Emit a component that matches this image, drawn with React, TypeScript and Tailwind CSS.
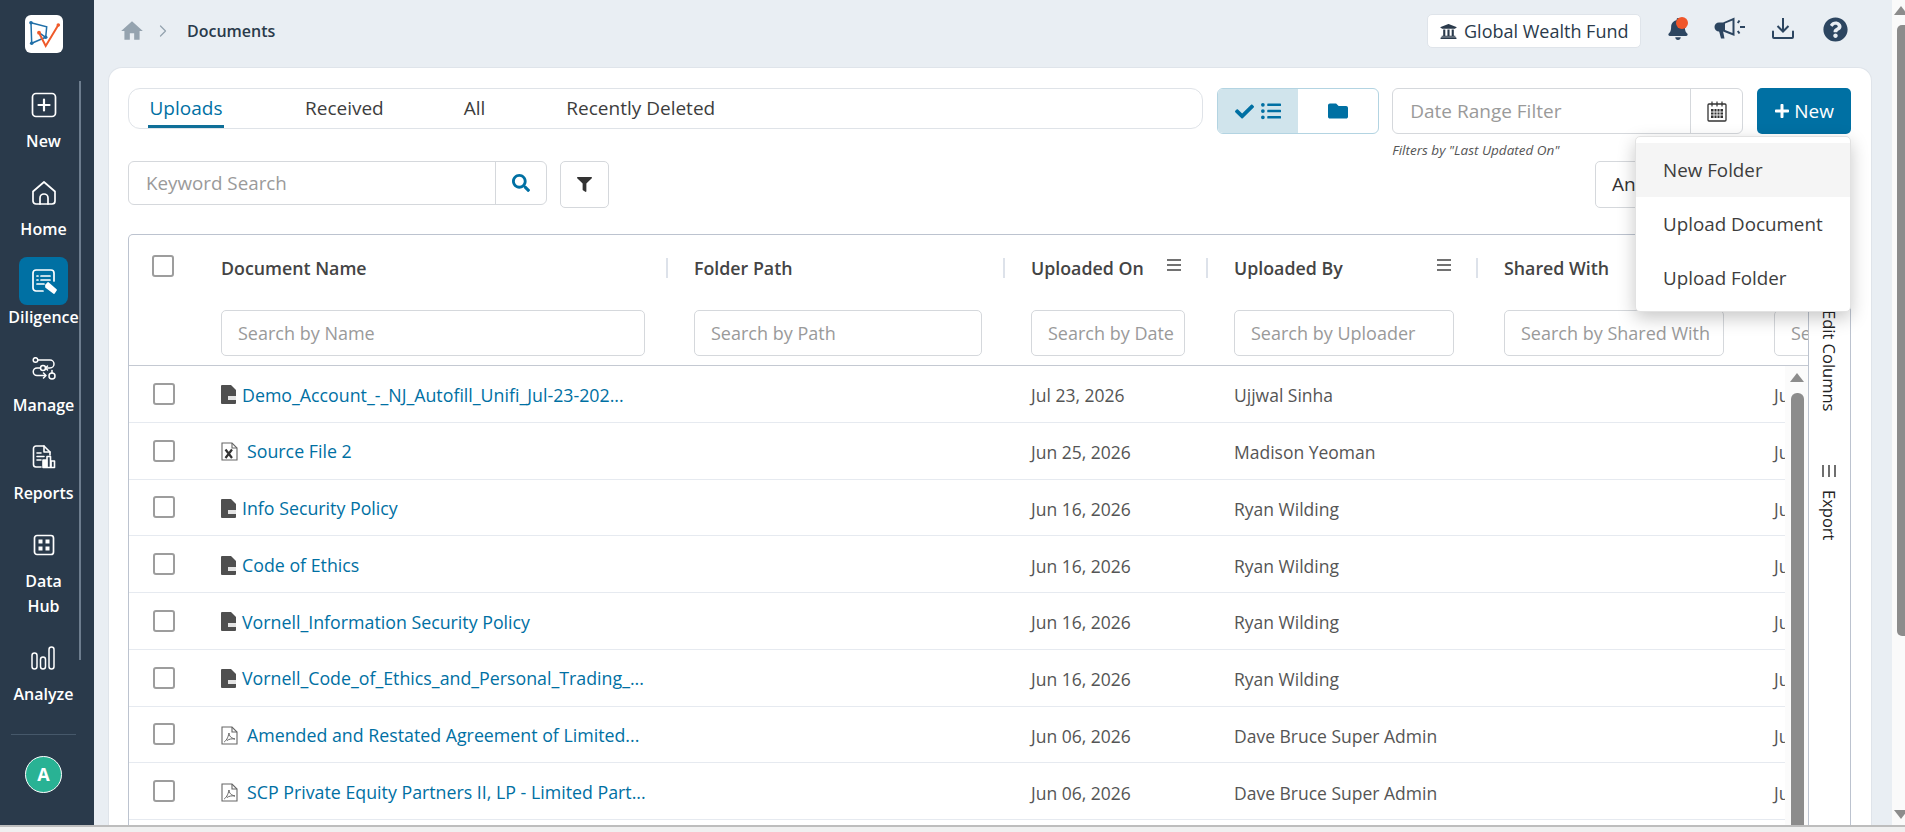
import React from 'react';
import { FaBell, FaCheck, FaFilter, FaFolder, FaListUl, FaPlus, FaQuestionCircle, FaSearch, FaUniversity } from 'react-icons/fa';
import { MdHome } from 'react-icons/md';
import { ChevronRight } from 'lucide-react';

type DocType = 'doc' | 'xls' | 'pdf';

const rows: { name: string; type: DocType; date: string; by: string }[] = [
  { name: 'Demo_Account_-_NJ_Autofill_Unifi_Jul-23-202...', type: 'doc', date: 'Jul 23, 2026', by: 'Ujjwal Sinha' },
  { name: 'Source File 2', type: 'xls', date: 'Jun 25, 2026', by: 'Madison Yeoman' },
  { name: 'Info Security Policy', type: 'doc', date: 'Jun 16, 2026', by: 'Ryan Wilding' },
  { name: 'Code of Ethics', type: 'doc', date: 'Jun 16, 2026', by: 'Ryan Wilding' },
  { name: 'Vornell_Information Security Policy', type: 'doc', date: 'Jun 16, 2026', by: 'Ryan Wilding' },
  { name: 'Vornell_Code_of_Ethics_and_Personal_Trading_...', type: 'doc', date: 'Jun 16, 2026', by: 'Ryan Wilding' },
  { name: 'Amended and Restated Agreement of Limited...', type: 'pdf', date: 'Jun 06, 2026', by: 'Dave Bruce Super Admin' },
  { name: 'SCP Private Equity Partners II, LP - Limited Part...', type: 'pdf', date: 'Jun 06, 2026', by: 'Dave Bruce Super Admin' },
];

const gridCols = 'grid grid-cols-[92px_473px_337px_203px_270px_270px_1fr]';

function Logo() {
  return (
    <svg width="38" height="38" viewBox="0 0 38 38" fill="none">
      <path d="M6 7.7 21.7 11.7 20.7 22.3 6.7 28.3Z M14 17.7 20.7 22.3" stroke="#1f6fa8" strokeWidth="1.5" />
      <path d="M14 17.7 20.7 31 33.3 10" stroke="#ef5a2a" strokeWidth="2" />
      <circle cx="6" cy="7.7" r="1.8" fill="#1f6fa8" />
      <circle cx="20.7" cy="22.3" r="1.8" fill="#1f6fa8" />
      <circle cx="6.7" cy="28.3" r="1.8" fill="#1f6fa8" />
      <circle cx="14" cy="17.7" r="1.9" fill="#ef5a2a" />
      <circle cx="33.3" cy="10" r="1.8" fill="#ef5a2a" />
    </svg>
  );
}

const strokeProps = { fill: 'none', stroke: 'white', strokeWidth: 1.7, strokeLinecap: 'round', strokeLinejoin: 'round' } as const;

function NewIcon() {
  return (
    <svg width="26" height="26" viewBox="0 0 26 26" {...strokeProps}>
      <rect x="1.5" y="1.5" width="23" height="23" rx="3.5" />
      <path d="M13 7.5v11M7.5 13h11" strokeWidth="2.2" />
    </svg>
  );
}

function HomeIcon() {
  return (
    <svg width="26" height="26" viewBox="0 0 26 26" {...strokeProps}>
      <path d="M2 11.5 13 2l11 9.5V21a3 3 0 0 1-3 3H5a3 3 0 0 1-3-3Z" />
      <path d="M9 24v-6a4 4 0 0 1 8 0v6" />
    </svg>
  );
}

function DiligenceIcon() {
  return (
    <svg width="26" height="26" viewBox="0 0 26 26" {...strokeProps}>
      <path d="M12 23H5a3 3 0 0 1-3-3V5a3 3 0 0 1 3-3h15a3 3 0 0 1 3 3v8" />
      <path d="M6 8h1M10 8h9M6 12h1M10 12h9M6 16h7" />
      <path d="m15 17 2-2 8 7-2 3-8-6Z" fill="white" />
    </svg>
  );
}

function ManageIcon() {
  return (
    <svg width="24" height="24" viewBox="0 0 24 24" {...strokeProps} strokeWidth={1.5}>
      <circle cx="3.5" cy="3" r="2.3" />
      <path d="M6 3h12a4 4 0 0 1 0 8h-4" />
      <path d="m15.5 9-2 2 2 2" />
      <circle cx="11" cy="11" r="2.5" />
      <path d="M8.5 11H5a3.5 3.5 0 0 0 0 7.5h8" />
      <path d="m11.5 16 2.5 2.5-2.5 2.5" />
      <circle cx="20" cy="19" r="3" />
      <path d="M20 13.5v2.5" />
    </svg>
  );
}

function ReportsIcon() {
  return (
    <svg width="24" height="24" viewBox="0 0 24 24" {...strokeProps} strokeWidth={1.6}>
      <path d="M9 22H4a2.5 2.5 0 0 1-2.5-2.5v-16A2.5 2.5 0 0 1 4 1h8l6 6v3" />
      <path d="M12 1v6h6" />
      <path d="M5 8h4M5 11.5h7M5 15h4" />
      <rect x="11" y="15" width="3.5" height="7.5" fill="white" />
      <rect x="15" y="11.5" width="3.5" height="11" />
      <rect x="19" y="16" width="3.5" height="6.5" />
    </svg>
  );
}

function DataHubIcon() {
  return (
    <svg width="22" height="22" viewBox="0 0 22 22" fill="none">
      <rect x="1.5" y="1.5" width="19" height="19" rx="2.5" stroke="white" strokeWidth="1.7" />
      <rect x="5.5" y="5.5" width="4" height="4" fill="white" />
      <rect x="12.5" y="5.5" width="4" height="4" fill="white" />
      <rect x="5.5" y="12.5" width="4" height="4" fill="white" />
      <rect x="12.5" y="12.5" width="4" height="4" fill="white" />
    </svg>
  );
}

function AnalyzeIcon() {
  return (
    <svg width="24" height="24" viewBox="0 0 24 24" {...strokeProps} strokeWidth={1.5}>
      <rect x="1" y="7" width="5" height="16" rx="2.5" />
      <rect x="9.5" y="11" width="5" height="12" rx="2.5" />
      <rect x="18" y="1" width="5" height="22" rx="2.5" />
    </svg>
  );
}

function MegaphoneIcon() {
  return (
    <svg width="32" height="24" viewBox="0 0 32 24" fill="none" className="ml-[25px] mt-[2px]">
      <path d="M5 6.5 h4 L20.5 1.5 V20 L9 15.5 H5 A4.5 4.5 0 0 1 5 6.5Z" fill="#2c4560" />
      <path d="M11 7.5 18.5 4.5 V17 L11 14Z" fill="#e9eef3" />
      <path d="M5 15h4l1.5 7.5H7Z" fill="#2c4560" />
      <path d="M25.5 4.5 23.8 7M26 11h5M25.5 17.5 23.8 15" stroke="#2c4560" strokeWidth="2" />
    </svg>
  );
}

function DownloadIcon() {
  return (
    <svg width="22" height="22" viewBox="0 0 22 22" fill="none" stroke="#2c4560" strokeWidth="2" className="ml-[26px] mt-[3px]">
      <path d="M11 1v13M5.5 9l5.5 5.500L16.500 9" />
      <path d="M1 14.500V20a1 1 0 0 0 1 1h18a1 1 0 0 0 1-1v-5.500" strokeLinecap="round" />
    </svg>
  );
}

function CalendarIcon() {
  return (
    <svg width="20" height="21" viewBox="0 0 20 21" fill="none">
      <rect x="1" y="3" width="18" height="17" rx="1" stroke="#333" strokeWidth="1.3" />
      <path d="M5 0.500v5M10 0.500v5M15 0.500v5" stroke="#333" strokeWidth="1.2" />
      <path d="M4 8h12v9H4Z" fill="#333" />
      <path d="M7 8v9M10 8v9M13 8v9M4 11h12M4 14h12" stroke="white" strokeWidth="0.9" />
    </svg>
  );
}

function DocFileIcon() {
  return (
    <svg width="15" height="19" viewBox="0 0 15 19" className="shrink-0">
      <path d="M0 1a1 1 0 0 1 1-1h9l5 5v13a1 1 0 0 1-1 1H1a1 1 0 0 1-1-1Z" fill="#4f4f4f" />
      <rect x="7" y="11" width="8" height="4" fill="#e4e4e4" />
    </svg>
  );
}

function XlsFileIcon() {
  return (
    <svg width="17" height="19" viewBox="0 0 17 19" fill="none" className="shrink-0">
      <path d="M1 1h10l5 5v12H1Z" stroke="#666" strokeWidth="1.1" />
      <path d="M11 1v5h5" stroke="#666" strokeWidth="1.1" />
      <path d="M4.500 7.500 11 16M11 7.500 4.500 16" stroke="#333" strokeWidth="2.2" />
    </svg>
  );
}

function PdfFileIcon() {
  return (
    <svg width="17" height="19" viewBox="0 0 17 19" fill="none" className="shrink-0">
      <path d="M1 1h10l5 5v12H1Z" stroke="#666" strokeWidth="1.1" />
      <path d="M11 1v5h5" stroke="#666" strokeWidth="1.1" />
      <path d="M3 16c2-1 4-4 5-9 0 3 2 5 6 6-3-.5-6 0-8 1.500" stroke="#666" strokeWidth="1" />
    </svg>
  );
}

function MenuLines() {
  return (
    <svg width="14" height="12" viewBox="0 0 14 12" className="shrink-0 -mt-[7px]">
      <path d="M0 1h14M0 6h14M0 11h14" stroke="#444" strokeWidth="1.5" />
    </svg>
  );
}

function NavItem({ label, active, icon }: { label: string; active?: boolean; icon: React.ReactNode }) {
  const lines = label.split(' ');
  return (
    <div className="flex flex-col items-center pb-4">
      <div className={`flex h-12 w-[49px] items-center justify-center rounded-lg ${active ? 'bg-[#0070a3]' : ''}`}>{icon}</div>
      {lines.map((l) => (
        <div key={l} className={`text-[16px] font-semibold whitespace-nowrap text-white ${lines.length > 1 ? 'h-[24.5px] leading-[25px]' : 'h-[24px] leading-[25px]'}`}>
          {l}
        </div>
      ))}
    </div>
  );
}

function Sidebar() {
  return (
    <aside className="relative flex w-[94px] shrink-0 flex-col items-center overflow-hidden bg-[#2a3a4b] pr-[7px]">
      <div className="mt-[15px] flex h-[38px] w-[38px] items-center justify-center rounded-md bg-white">
        <Logo />
      </div>
      <div className="absolute left-[79px] top-[81px] h-[579px] w-[2px] bg-[#6d7d8e]" />
      <nav className="mt-[28px] flex flex-col items-center">
        <NavItem label="New" icon={<NewIcon />} />
        <NavItem label="Home" icon={<HomeIcon />} />
        <NavItem label="Diligence" active icon={<DiligenceIcon />} />
        <NavItem label="Manage" icon={<ManageIcon />} />
        <NavItem label="Reports" icon={<ReportsIcon />} />
        <NavItem label="Data Hub" icon={<DataHubIcon />} />
        <NavItem label="Analyze" icon={<AnalyzeIcon />} />
      </nav>
      <div className="mt-[12px] h-px w-[65px] bg-[#46586a]" />
      <div className="mt-[21px] flex h-[37px] w-[37px] items-center justify-center rounded-full border border-white bg-[#29b294] text-[18px] font-bold text-white">
        A
      </div>
    </aside>
  );
}

function TopBar() {
  return (
    <header className="flex h-[67px] shrink-0 items-start text-[#2a3a4b]">
      <div className="ml-[25px] mt-[18px] flex items-center">
        <MdHome className="text-[#95a3af]" size={26} />
        <ChevronRight className="ml-[8px] text-[#95a3af]" size={20} strokeWidth={1.5} />
        <span className="ml-[14px] text-[16px] font-semibold">Documents</span>
      </div>
      <div className="ml-auto mr-[44px] mt-[14px] flex items-start">
        <div className="flex h-[34px] w-[214px] items-center gap-[7px] rounded-[5px] border border-[#dfe4ea] bg-white pl-[12px] text-[18px]">
          <FaUniversity size={17} />
          Global Wealth Fund
        </div>
        <div className="relative ml-[26px] mt-[4px] text-[#2c4560]">
          <FaBell size={22} />
          <span className="absolute left-[9px] -top-[1px] h-[12px] w-[12px] rounded-full bg-[#f0562a]" />
        </div>
        <MegaphoneIcon />
        <DownloadIcon />
        <FaQuestionCircle size={25} className="ml-[29px] mt-[3px] text-[#2c4560]" />
      </div>
    </header>
  );
}

function NewDropdown() {
  return (
    <div className="absolute right-0 top-[48px] z-20 w-[216px] rounded-[5px] border border-[#e2e2e2] bg-white py-[6px] text-[18.8px] text-[#3d3d3d] shadow-[0_6px_18px_rgba(0,0,0,0.22)]">
      <div className="flex h-[54px] items-center bg-[#f5f5f5] pl-[27px]">New Folder</div>
      <div className="flex h-[54px] items-center pl-[27px]">Upload Document</div>
      <div className="flex h-[54px] items-center pl-[27px]">Upload Folder</div>
    </div>
  );
}

function Toolbar() {
  return (
    <>
      <div className="flex items-start">
        <div className="flex h-[41px] w-[1076px] items-stretch rounded-[12px] border border-[#dfe3e8] text-[19px] text-[#3d3d3d]">
          <div className="ml-[19px] w-[76px] border-b-[3px] border-[#0f6f98] text-center font-medium leading-[38px] text-[#0070a3]">Uploads</div>
          <div className="ml-[81px] leading-[38px]">Received</div>
          <div className="ml-[80px] leading-[38px]">All</div>
          <div className="ml-[81px] leading-[38px]">Recently Deleted</div>
        </div>
        <div className="ml-[14px] flex h-[46px] w-[162px] overflow-hidden rounded-[6px] border border-[#b3d4e2]">
          <div className="flex w-[80px] items-center justify-center gap-[7px] bg-[#d0e4ec] text-[#0070a3]">
            <FaCheck size={19} />
            <FaListUl size={20} />
          </div>
          <div className="flex flex-1 items-center justify-center text-[#0070a3]">
            <FaFolder size={20} />
          </div>
        </div>
        <div className="ml-[13px] flex w-[351px] flex-col">
          <div className="flex h-[46px] rounded-[6px] border border-[#d5d8dc]">
            <div className="flex flex-1 items-center pl-[17px] text-[19px] text-[#9a9a9a]">Date Range Filter</div>
            <div className="flex w-[52px] items-center justify-center border-l border-[#d5d8dc]">
              <CalendarIcon />
            </div>
          </div>
          <div className="mt-[10px] h-[12px] text-[13.5px] italic leading-[12px] text-[#555]">Filters by "Last Updated On"</div>
        </div>
        <div className="relative ml-[14px]">
          <button className="flex h-[46px] w-[94px] items-center justify-center gap-[4px] rounded-[5px] bg-[#0070a3] text-[19px] text-white">
            <FaPlus size={16} />
            New
          </button>
          <NewDropdown />
        </div>
      </div>
      <div className="mt-[5px] flex items-start">
        <div className="flex h-[44px] w-[419px] rounded-[6px] border border-[#d5d8dc]">
          <div className="flex flex-1 items-center pl-[17px] pt-[1px] text-[18.8px] text-[#9a9a9a]">Keyword Search</div>
          <div className="flex w-[51px] items-center justify-center border-l border-[#d5d8dc] text-[#0070a3]">
            <FaSearch size={18} />
          </div>
        </div>
        <div className="ml-[13px] flex h-[47px] w-[49px] items-center justify-center rounded-[5px] border border-[#d5d8dc] text-[#333]">
          <FaFilter size={15} />
        </div>
        <div className="ml-auto flex items-start gap-[10px]">
          <div className="flex h-[47px] w-[130px] items-center rounded-[5px] border border-[#d5d8dc] pl-[16px] text-[19px] text-[#333]">Analyze</div>
          <div className="h-[47px] w-[116px] rounded-[5px] bg-[#0070a3]" />
        </div>
      </div>
    </>
  );
}

function FilterInput({ placeholder, width }: { placeholder: string; width: string }) {
  return (
    <div className={`mt-[30px] flex h-[46px] items-center overflow-hidden whitespace-nowrap rounded-[5px] border border-[#d5d8dc] pl-[16px] pt-[1px] text-[18px] text-[#9a9a9a] ${width}`}>{placeholder}</div>
  );
}

function HeaderCell({ title, placeholder, width, menu }: { title: string; placeholder: string; width: string; menu?: boolean }) {
  return (
    <div className="flex flex-col pr-[26px] pt-[21px]">
      <div className="flex h-[24px] items-center">
        <span className="flex-1 text-[17.8px] font-semibold whitespace-nowrap text-[#444]">{title}</span>
        {menu && <MenuLines />}
        <span className="ml-[25px] h-[20px] w-[2px] bg-[#dde2ea]" />
      </div>
      <FilterInput placeholder={placeholder} width={width} />
    </div>
  );
}

function Checkbox() {
  return <span className="block h-[22px] w-[22px] rounded-[3px] border-2 border-[#9d9d9d] bg-white" />;
}

function FileIcon({ type }: { type: DocType }) {
  if (type === 'doc') return <DocFileIcon />;
  return type === 'pdf' ? <PdfFileIcon /> : <XlsFileIcon />;
}

function DocumentTable() {
  return (
    <div className="mt-[26px] flex min-h-0 flex-1 rounded-t-[5px] border border-b-0 border-[#bcc3cf]">
      <div className="flex w-[1679px] flex-col overflow-hidden">
        <div className={`${gridCols} h-[131px] shrink-0 border-b border-[#c4c9d2]`}>
          <div className="pl-[23px] pt-[20px]">
            <Checkbox />
          </div>
          <HeaderCell title="Document Name" placeholder="Search by Name" width="w-[424px]" />
          <HeaderCell title="Folder Path" placeholder="Search by Path" width="w-[288px]" />
          <HeaderCell title="Uploaded On" placeholder="Search by Date" width="w-[154px]" menu />
          <HeaderCell title="Uploaded By" placeholder="Search by Uploader" width="w-[220px]" menu />
          <HeaderCell title="Shared With" placeholder="Search by Shared With" width="w-[220px]" />
          <div className="overflow-hidden pt-[21px]">
            <div className="mt-[54px] flex h-[46px] w-[60px] items-center rounded-[5px] border border-[#d5d8dc] pl-[16px] pt-[1px] text-[18px] text-[#9a9a9a]">Se</div>
          </div>
        </div>
        <div className="flex min-h-0 flex-1">
          <div className="w-[1656px] overflow-hidden">
            {rows.map((r) => (
              <div key={r.name} className={`${gridCols} h-[56.75px] items-center border-b border-[#e6eaf0] text-[17.5px] text-[#555]`}>
                <div className="pl-[24px]">
                  <Checkbox />
                </div>
                <div className="flex items-center gap-[6px] pt-[2px]">
                  <FileIcon type={r.type} />
                  <span className={`whitespace-nowrap text-[17.8px] text-[#0070a3] ${r.type === 'doc' ? '' : 'ml-[3px]'}`}>{r.name}</span>
                </div>
                <div />
                <div className="pt-[3px]">{r.date}</div>
                <div className="pt-[3px]">{r.by}</div>
                <div />
                <div className="pt-[3px] whitespace-nowrap">Jun</div>
              </div>
            ))}
          </div>
          <div className="flex w-[23px] flex-col items-center bg-[#fbfbfb] pl-[1px]">
            <div className="mt-[7px] h-0 w-0 border-x-[7px] border-b-[9px] border-x-transparent border-b-[#8c8c8c]" />
            <div className="mt-[11px] w-[13px] flex-1 rounded-t-[6px] bg-[#8c8c8c]" />
          </div>
        </div>
      </div>
      <div className="flex flex-1 flex-col items-center border-l border-[#bcc3cf] pr-[2px] pt-[66px] text-[16.5px] text-[#222]">
        <span className="mt-[9px] [writing-mode:vertical-rl]">Edit Columns</span>
        <svg width="14" height="12" viewBox="0 0 14 12" className="mt-[54px]">
          <path d="M1 0v12M7 0v12M13 0v12" stroke="#333" strokeWidth="1.4" />
        </svg>
        <span className="mt-[13px] [writing-mode:vertical-rl]">Export</span>
      </div>
    </div>
  );
}

function PageScrollbar() {
  return (
    <div className="flex w-[13px] shrink-0 flex-col items-end bg-[#fafafa]">
      <div className="mr-[-3px] mt-[6px] h-0 w-0 border-x-[7px] border-b-[9px] border-x-transparent border-b-[#8c8c8c]" />
      <div className="mt-[10px] h-[611px] w-[8px] rounded-l-[5px] bg-[#8c8c8c]" />
      <div className="mr-[-3px] mt-[174px] h-0 w-0 border-x-[7px] border-t-[9px] border-x-transparent border-t-[#8c8c8c]" />
    </div>
  );
}

export default function App() {
  return (
    <div className="flex h-[832px] w-[1905px] flex-col overflow-hidden bg-[#e9eef3] font-['Open_Sans',sans-serif]">
      <div className="flex min-h-0 flex-1">
        <Sidebar />
        <main className="flex min-w-0 flex-1 flex-col">
          <TopBar />
          <section className="ml-[14px] mr-[20px] flex min-h-0 flex-1 flex-col rounded-t-[14px] border border-b-0 border-[#dfe4ea] bg-white pl-[19px] pr-[20px] pt-[20px]">
            <Toolbar />
            <DocumentTable />
          </section>
        </main>
        <PageScrollbar />
      </div>
      <div className="h-[7px] shrink-0 border-t-2 border-[#bdbdbd] bg-[#f0f0f0]" />
    </div>
  );
}
